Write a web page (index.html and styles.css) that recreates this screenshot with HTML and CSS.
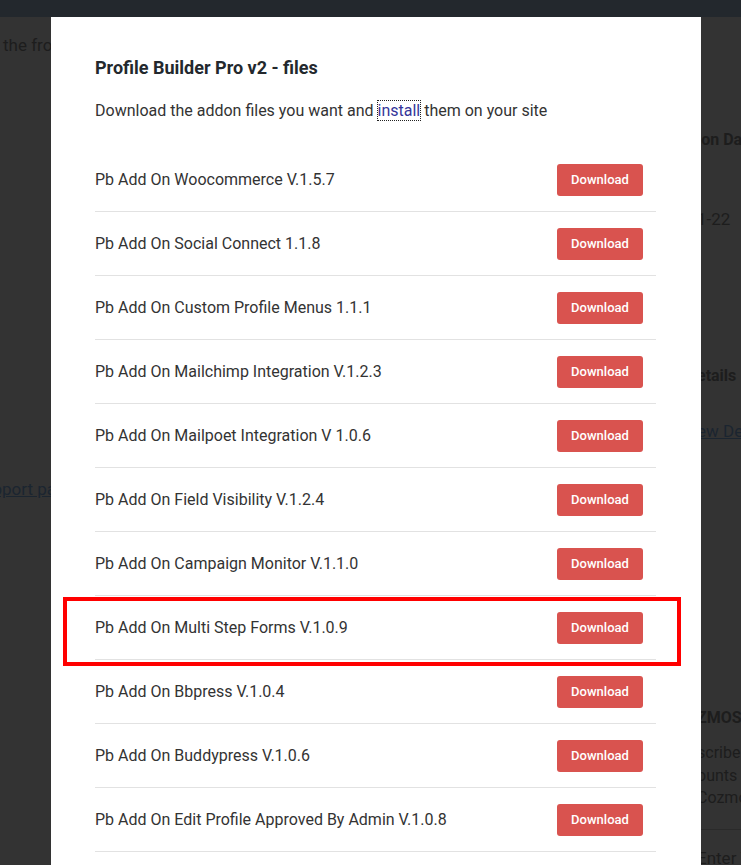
FILE: index.html
```html
<!DOCTYPE html>
<html lang="en">
<head>
<meta charset="utf-8">
<title>Profile Builder Pro v2 - files</title>
<link rel="stylesheet" href="styles.css">
</head>
<body>
<div class="adminbar"></div>
<div class="page">
  <div class="page-left">
    <p class="bg-text first">the front</p>
    <a class="bg-link support">Support page</a>
  </div>
  <div class="page-right">
    <p class="bg-bold r1">ion Date</p>
    <p class="bg-text r2">1-22</p>
    <p class="bg-bold r3">etails</p>
    <a class="bg-link r4">ew Details</a>
    <p class="bg-bold r5">ZMOSLABS</p>
    <p class="bg-small r6">scribe</p>
    <p class="bg-small">ounts</p>
    <p class="bg-small">Cozmos</p>
    <div class="bg-rule"></div>
    <p class="bg-text r7">Enter Your</p>
  </div>
</div>

<div class="modal">
  <span class="close">&times;</span>
  <h2 class="modal-title">Profile Builder Pro v2 - files</h2>
  <p class="modal-sub">Download the addon files you want and <a class="install" href="#">install</a> them on your site</p>
  <ul class="files">
    <li class="file"><span class="name">Pb Add On Woocommerce V.1.5.7</span><a class="btn" href="#">Download</a></li>
    <li class="file"><span class="name">Pb Add On Social Connect 1.1.8</span><a class="btn" href="#">Download</a></li>
    <li class="file"><span class="name">Pb Add On Custom Profile Menus 1.1.1</span><a class="btn" href="#">Download</a></li>
    <li class="file"><span class="name">Pb Add On Mailchimp Integration V.1.2.3</span><a class="btn" href="#">Download</a></li>
    <li class="file"><span class="name">Pb Add On Mailpoet Integration V 1.0.6</span><a class="btn" href="#">Download</a></li>
    <li class="file"><span class="name">Pb Add On Field Visibility V.1.2.4</span><a class="btn" href="#">Download</a></li>
    <li class="file"><span class="name">Pb Add On Campaign Monitor V.1.1.0</span><a class="btn" href="#">Download</a></li>
    <li class="file highlighted"><span class="name">Pb Add On Multi Step Forms V.1.0.9</span><a class="btn" href="#">Download</a><span class="mark"></span></li>
    <li class="file"><span class="name">Pb Add On Bbpress V.1.0.4</span><a class="btn" href="#">Download</a></li>
    <li class="file"><span class="name">Pb Add On Buddypress V.1.0.6</span><a class="btn" href="#">Download</a></li>
    <li class="file"><span class="name">Pb Add On Edit Profile Approved By Admin V.1.0.8</span><a class="btn" href="#">Download</a></li>
    <li class="file"><span class="name">Pb Add On Labels Edit V.1.1.2</span><a class="btn" href="#">Download</a></li>
  </ul>
</div>
</body>
</html>
```

FILE: styles.css
```css
* { box-sizing: border-box; }
html, body {
  margin: 0;
  padding: 0;
  height: 100%;
  overflow: hidden;
}
body {
  background: #333333;
  font-family: Roboto, "Liberation Sans", sans-serif;
  color: #1e1e1e;
  position: relative;
}
.adminbar {
  height: 17px;
  background: #23282d;
  position: relative;
  z-index: 3;
}
.page {
  display: flex;
  justify-content: space-between;
}
.page-left {
  width: 120px;
  padding-left: 3px;
  display: flex;
  flex-direction: column;
  align-items: flex-start;
}
.page-right {
  width: 44px;
  display: flex;
  flex-direction: column;
  white-space: nowrap;
}
.bg-text, .bg-bold, .bg-small {
  margin: 0;
  font-size: 17px;
  line-height: 22px;
  color: #1d1d1d;
  white-space: nowrap;
}
.bg-bold { font-weight: 700; font-size: 16px; }
.bg-small { font-size: 16px; line-height: 22.5px; }
.bg-link {
  font-size: 17px;
  line-height: 22px;
  color: #1b2530;
  text-decoration: underline;
  white-space: nowrap;
}
.first { margin-top: 17px; }
.support { margin-top: 422px; margin-left: -30px; }
.r1 { margin-top: 112px; }
.r2 { margin-top: 57px; }
.r3 { margin-top: 135px; }
.r4 { margin-top: 33px; }
.r5 { margin-top: 265px; }
.r6 { margin-top: 13px; }
.bg-rule { height: 1px; background: #2a2a2a; margin-top: 19px; }
.r7 { margin-top: 17px; }

.modal {
  position: absolute;
  top: 17px;
  left: 51px;
  width: 650px;
  height: 900px;
  background: #ffffff;
  padding: 39px 45px 0 44px;
  z-index: 2;
}
.close {
  position: absolute;
  top: -16px;
  right: 14px;
  font-size: 22px;
  line-height: 22px;
  color: #8a8a8a;
}
.modal-title {
  margin: 0;
  font-size: 18px;
  line-height: 24px;
  font-weight: 700;
  color: #23282d;
}
.modal-sub {
  margin: 19px 0 0;
  font-size: 16px;
  line-height: 24px;
  color: #333333;
}
.install {
  color: #35359a;
  text-decoration: none;
  outline: 1px dotted #222;
  outline-offset: 0;
}
.files {
  list-style: none;
  margin: 25px 0 0;
  padding: 0;
}
.file {
  display: flex;
  align-items: center;
  justify-content: space-between;
  height: 64px;
  border-bottom: 1px solid #e2e2e2;
  padding-right: 13px;
  position: relative;
}
.name {
  font-size: 16px;
  color: #333333;
}
.btn {
  width: 86px;
  height: 32px;
  display: flex;
  align-items: center;
  justify-content: center;
  background: #d9534f;
  border-radius: 3px;
  color: #ffffff;
  font-size: 13px;
  font-weight: 500;
  text-decoration: none;
}
.mark {
  position: absolute;
  left: -32px;
  right: -25px;
  top: 1px;
  bottom: -7px;
  border: 4px solid #ff0000;
}
```
